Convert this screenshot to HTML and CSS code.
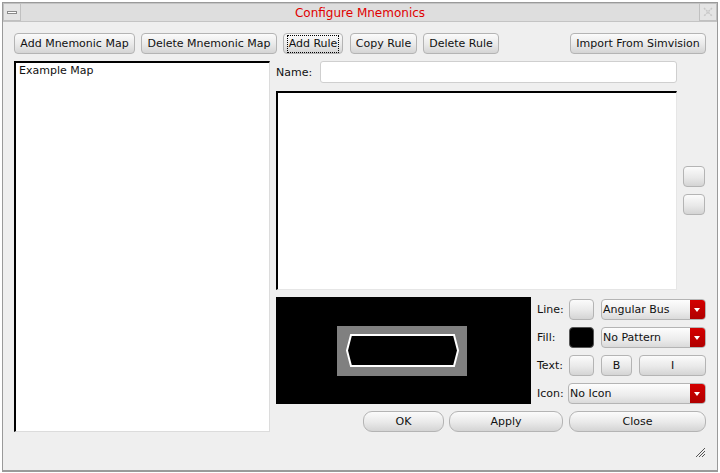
FILE: index.html
```html
<!DOCTYPE html>
<html>
<head>
<meta charset="utf-8">
<link rel="stylesheet" href="styles.css">
</head>
<body>
<div class="win">
  <div class="titlebar">
    <div class="tb-btn tb-min"><span class="min-line"></span></div>
    <div class="tb-title">Configure Mnemonics</div>
    <div class="tb-btn tb-close">
      <svg width="12" height="12" viewBox="0 0 12 12"><path d="M2 2 L10 10 M10 2 L2 10" stroke="#c8c8c8" stroke-width="1.5" stroke-dasharray="2 1" fill="none"/></svg>
    </div>
  </div>
  <div class="content">
    <div class="toolbar">
      <button class="btn w-addmap">Add Mnemonic Map</button>
      <button class="btn w-delmap">Delete Mnemonic Map</button>
      <button class="btn w-addrule"><span class="focus">Add Rule</span></button>
      <button class="btn w-copy">Copy Rule</button>
      <button class="btn w-delrule">Delete Rule</button>
      <span class="spacer"></span>
      <button class="btn w-import">Import From Simvision</button>
    </div>
    <div class="main">
      <div class="list"><div class="list-item">Example Map</div></div>
      <div class="right">
        <div class="name-row">
          <span class="name-label">Name:</span>
          <div class="input"></div>
        </div>
        <div class="rules-row">
          <div class="rules"></div>
          <div class="side">
            <button class="btn side-btn"></button>
            <button class="btn side-btn"></button>
          </div>
        </div>
        <div class="preview-row">
          <div class="preview">
            <div class="sample">
              <svg width="130" height="50" viewBox="0 0 130 50"><polygon points="10,24.5 14,9 117,9 121,24.5 117,40 14,40" fill="#000" stroke="#fff" stroke-width="2"/></svg>
            </div>
          </div>
          <div class="controls">
            <div class="ctl-row">
              <span class="ctl-label">Line:</span>
              <button class="btn swatch"></button>
              <div class="combo"><span class="combo-text">Angular Bus</span><span class="combo-arrow"></span></div>
            </div>
            <div class="ctl-row">
              <span class="ctl-label">Fill:</span>
              <button class="btn swatch swatch-black"></button>
              <div class="combo"><span class="combo-text">No Pattern</span><span class="combo-arrow"></span></div>
            </div>
            <div class="ctl-row">
              <span class="ctl-label">Text:</span>
              <button class="btn swatch"></button>
              <button class="btn bold-btn">B</button>
              <button class="btn italic-btn">I</button>
            </div>
            <div class="ctl-row">
              <span class="ctl-label icon-label">Icon:</span>
              <div class="combo"><span class="combo-text">No Icon</span><span class="combo-arrow"></span></div>
            </div>
          </div>
        </div>
        <div class="actions">
          <button class="btn pill w-ok">OK</button>
          <button class="btn pill w-apply">Apply</button>
          <button class="btn pill w-close">Close</button>
        </div>
      </div>
    </div>
    <div class="grip">
      <svg width="12" height="12" viewBox="0 0 12 12"><path d="M11 2 L2 11 M11 5 L5 11 M11 8 L8 11" stroke="#555" stroke-width="1" fill="none"/></svg>
    </div>
  </div>
</div>
</body>
</html>
```

FILE: styles.css
```css
* { box-sizing: border-box; }
html, body { margin: 0; padding: 0; background: #fff; }
body { font-family: "DejaVu Sans", sans-serif; font-size: 11px; color: #111; }

.win {
  margin: 2px 0 0 2px;
  width: 716px;
  height: 470px;
  border: 1px solid #9a9a9a;
  border-bottom-width: 2px;
  background: #efefef;
  display: flex;
  flex-direction: column;
}

.titlebar {
  height: 19px;
  display: flex;
  background: #dedede;
  border-bottom: 1px solid #c4c4c4;
}
.tb-btn {
  width: 18px;
  height: 18px;
  border: 1px solid #c0c0c0;
  background: #e4e4e4;
  display: flex;
  align-items: center;
  justify-content: center;
}
.min-line {
  width: 10px;
  height: 3px;
  background: #fff;
  border: 1px solid #8a8a8a;
}
.tb-title {
  flex: 1;
  text-align: center;
  font-size: 12px;
  line-height: 18px;
  color: #e00000;
  border-top: 1px solid #c4c4c4;
}

.content {
  flex: 1;
  padding: 11px 11px 0 11px;
  position: relative;
}

.btn {
  font-family: "DejaVu Sans", sans-serif;
  font-size: 11px;
  color: #111;
  height: 21px;
  padding: 0;
  border: 1px solid #b4b4b4;
  border-radius: 4px;
  background: linear-gradient(#fbfbfb, #e9e9e9 55%, #d4d4d4);
  display: flex;
  align-items: center;
  justify-content: center;
}

.toolbar { display: flex; gap: 6px; height: 21px; }
.spacer { flex: 1; }
.w-addmap { width: 121px; }
.w-delmap { width: 136px; }
.w-addrule { width: 60px; }
.w-copy { width: 67px; margin-left: 1px; }
.w-delrule { width: 76px; }
.w-import { width: 136px; }
.focus { outline: 1px dotted #000; padding: 1px 1px; line-height: 14px; }

.main {
  margin-top: 7px;
  display: grid;
  grid-template-columns: 256px 1fr;
  gap: 6px;
}
.list {
  height: 371px;
  background: #fff;
  border-style: solid;
  border-width: 2px 1px 1px 2px;
  border-color: #000 #dcdcdc #dcdcdc #000;
  padding: 1px 3px;
}
.list-item { line-height: 14px; }

.right { display: flex; flex-direction: column; }
.name-row { display: flex; align-items: center; height: 22px; }
.name-label { width: 44px; }
.input {
  width: 357px;
  height: 22px;
  background: #fff;
  border: 1px solid #cfcfcf;
  border-radius: 3px;
}
.rules-row { margin-top: 8px; display: flex; gap: 6px; align-items: center; }
.rules {
  width: 401px;
  height: 199px;
  background: #fff;
  border-style: solid;
  border-width: 2px 1px 1px 2px;
  border-color: #000 #e6e6e6 #e6e6e6 #000;
}
.side { display: flex; flex-direction: column; gap: 7px; }
.side-btn { width: 22px; height: 21px; }

.preview-row { margin-top: 7px; display: flex; gap: 6px; }
.preview {
  width: 255px;
  height: 107px;
  background: #000;
  display: flex;
  align-items: center;
  justify-content: center;
  padding-right: 3px;
}
.sample { width: 130px; height: 50px; background: #808080; }
.sample svg { display: block; }

.controls {
  flex: 1;
  padding-top: 2px;
  display: flex;
  flex-direction: column;
  gap: 7px;
}
.ctl-row { display: flex; align-items: center; height: 21px; gap: 7px; }
.ctl-label { width: 25px; }
.icon-label { width: 24px; }
.swatch { width: 25px; }
.swatch-black { background: #000; border-color: #555; }
.bold-btn { width: 31px; }
.italic-btn { flex: 1; }

.combo {
  flex: 1;
  height: 21px;
  display: flex;
  border: 1px solid #b4b4b4;
  border-radius: 4px;
  background: linear-gradient(#fdfdfd, #ececec 60%, #dadada);
  overflow: hidden;
}
.combo-text { flex: 1; padding-left: 1px; line-height: 19px; }
.combo-arrow {
  width: 15px;
  background: linear-gradient(#d40000, #b00000);
  position: relative;
}
.combo-arrow::after {
  content: "";
  position: absolute;
  left: 4px;
  top: 8px;
  border-left: 3.5px solid transparent;
  border-right: 3.5px solid transparent;
  border-top: 4px solid #fff;
}

.actions {
  margin-top: 7px;
  display: flex;
  justify-content: flex-end;
  gap: 5px;
}
.pill { border-radius: 9px; }
.w-ok { width: 81px; }
.w-apply { width: 114px; }
.w-close { width: 137px; margin-left: 1px; }

.grip { position: absolute; right: 11px; bottom: 12px; width: 12px; height: 12px; }
.grip svg { display: block; }
```
